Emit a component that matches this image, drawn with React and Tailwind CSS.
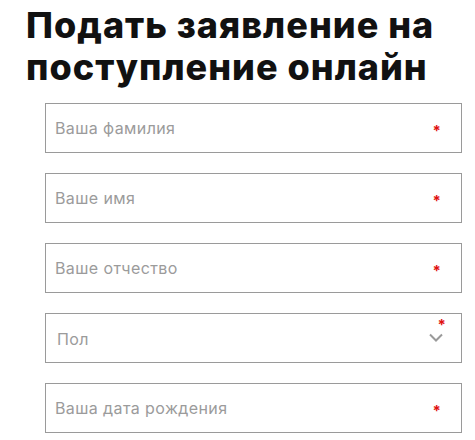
import React from "react";

const fields = [
  { id: "lastName", label: "Ваша фамилия" },
  { id: "firstName", label: "Ваше имя" },
  { id: "middleName", label: "Ваше отчество" },
  { id: "gender", label: "Пол", select: true },
  { id: "birthDate", label: "Ваша дата рождения" },
];

function Field({ label, select }) {
  return (
    <div className="relative flex h-[50px] items-center justify-between border border-[#9a9a9a] bg-white pl-[9px] pr-[20px]">
      <span className={`text-[16px] tracking-[0.4px] text-[#9b9b9b] ${select ? "pl-[2px] pt-[1px]" : ""}`}>{label}</span>
      {select ? (
        <>
          <span className="absolute right-[15px] top-[3px] text-[15px] font-bold leading-none text-[#e01010]">*</span>
          <svg width="14" height="9" viewBox="0 0 14 9" className="mr-[-2px] mt-[-2px]" fill="none" stroke="#9a9a9a" strokeWidth="2">
            <path d="M1 1.5 7 7.5 13 1.5" />
          </svg>
        </>
      ) : (
        <span className="pt-[4px] text-[15px] font-bold leading-none text-[#e01010]">*</span>
      )}
    </div>
  );
}

export default function App() {
  return (
    <div className="min-h-[440px] w-[475px] bg-white font-['Inter',sans-serif]">
      <h1 className="pl-[26px] pt-[4px] text-[36px] font-extrabold leading-[42px] tracking-[1px] text-[#111]">
        Подать заявление на
        <br />
        поступление онлайн
      </h1>
      <form className="mt-[15px] flex w-[417px] flex-col gap-[20px] pl-[45px] box-content">
        {fields.map((f) => (
          <Field key={f.id} label={f.label} select={f.select} />
        ))}
      </form>
    </div>
  );
}
